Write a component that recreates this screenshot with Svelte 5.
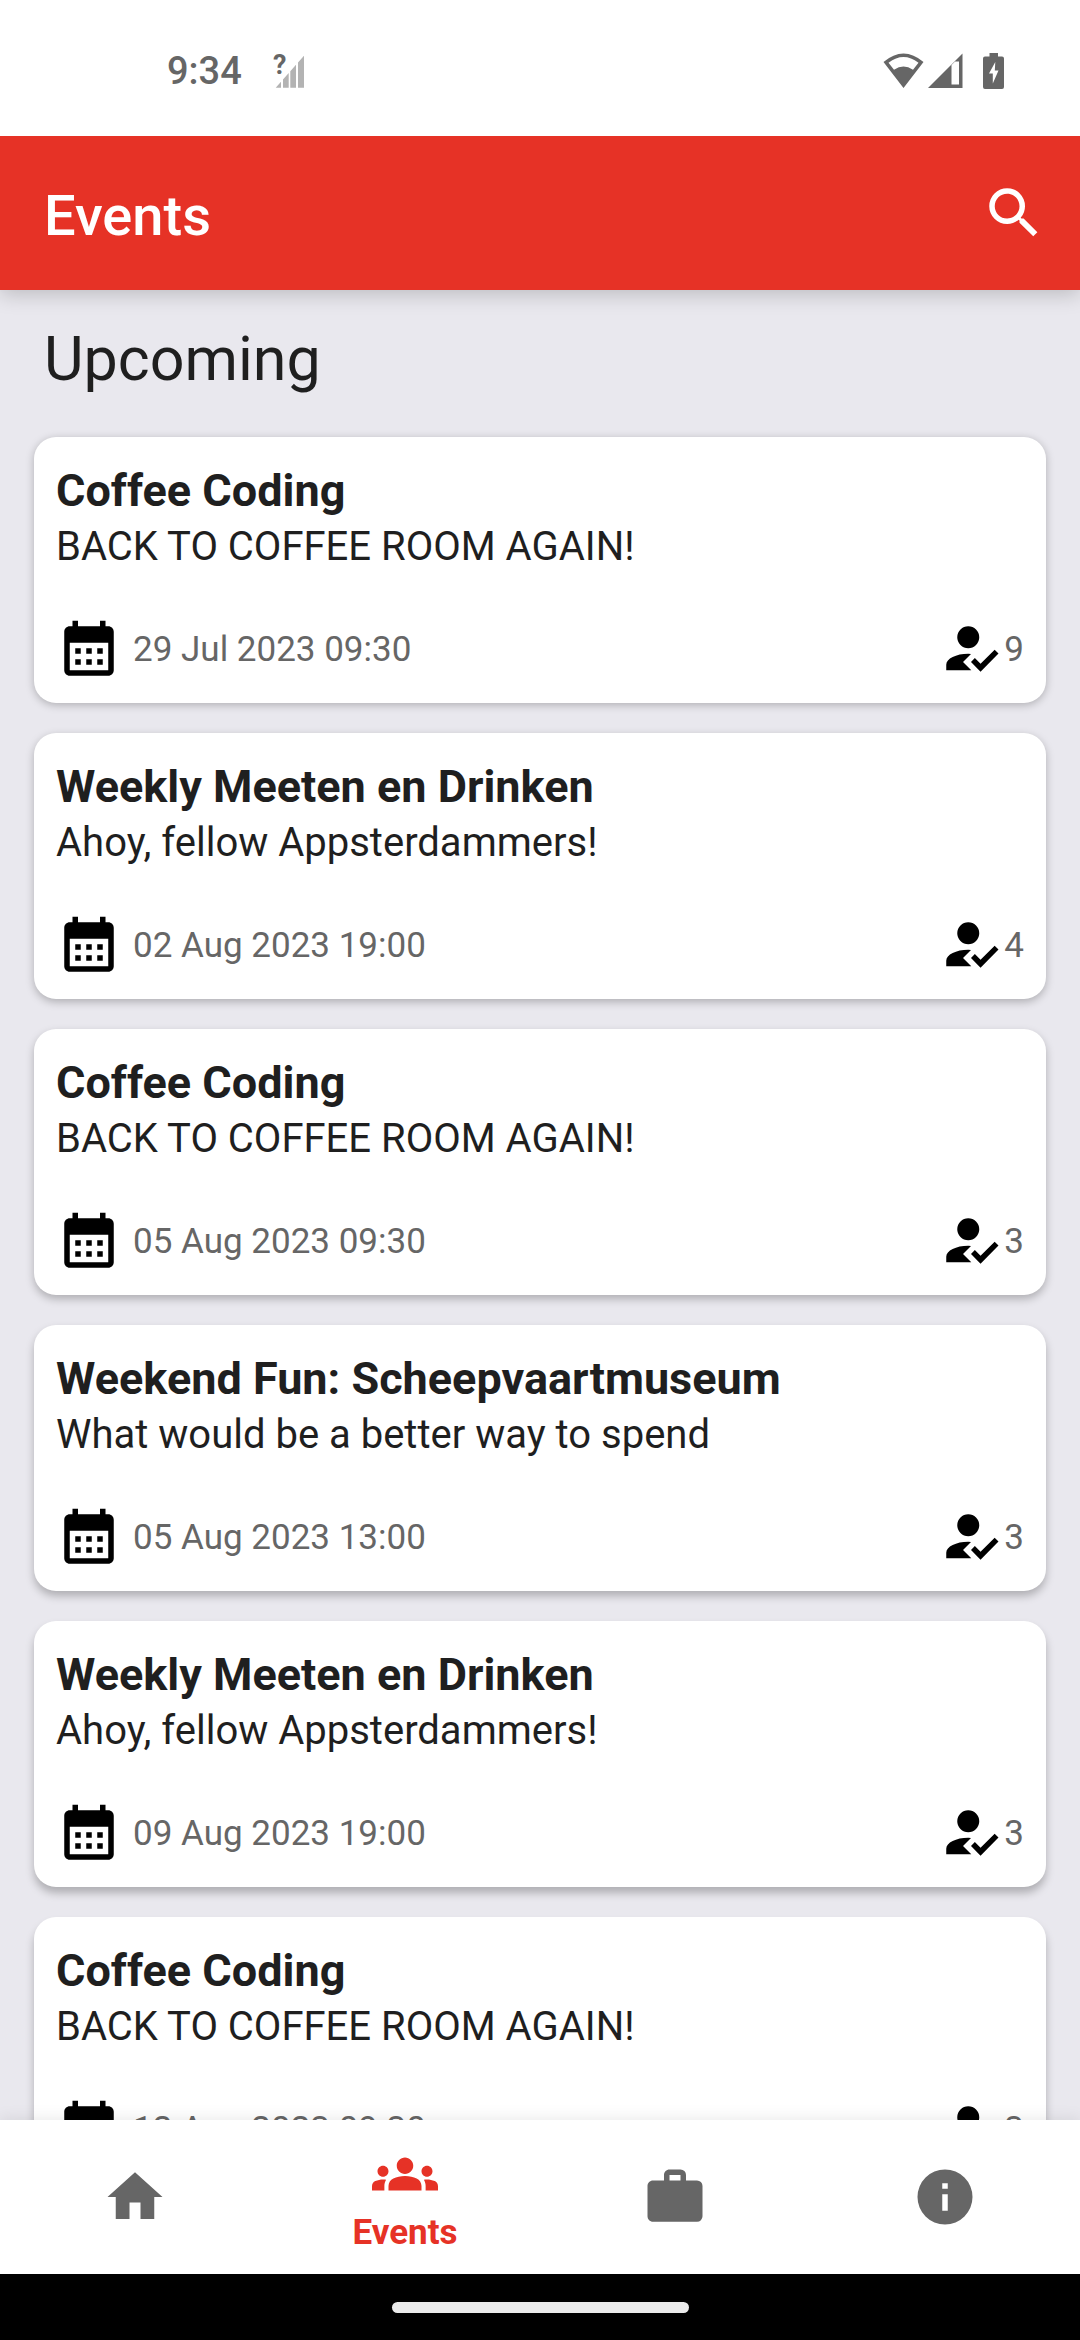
<script>
  const events = [
    { title: 'Coffee Coding', text: 'BACK TO COFFEE ROOM AGAIN!', date: '29 Jul 2023 09:30', going: 9 },
    { title: 'Weekly Meeten en Drinken', text: 'Ahoy, fellow Appsterdammers!', date: '02 Aug 2023 19:00', going: 4 },
    { title: 'Coffee Coding', text: 'BACK TO COFFEE ROOM AGAIN!', date: '05 Aug 2023 09:30', going: 3 },
    { title: 'Weekend Fun: Scheepvaartmuseum', text: 'What would be a better way to spend', date: '05 Aug 2023 13:00', going: 3 },
    { title: 'Weekly Meeten en Drinken', text: 'Ahoy, fellow Appsterdammers!', date: '09 Aug 2023 19:00', going: 3 },
    { title: 'Coffee Coding', text: 'BACK TO COFFEE ROOM AGAIN!', date: '12 Aug 2023 09:30', going: 3 }
  ];

  const tabs = [
    { name: 'Home', path: 'M10 20V14H14V20H19V12H22L12 3L2 12H5V20H10Z' },
    {
      name: 'Events',
      active: true,
      path: 'M12 12.75c1.63 0 3.07.39 4.24.9 1.08.48 1.76 1.56 1.76 2.73V18H6v-1.61c0-1.18.68-2.26 1.76-2.73 1.17-.52 2.61-.91 4.24-.91zM4 13c1.1 0 2-.9 2-2s-.9-2-2-2-2 .9-2 2 .9 2 2 2zm1.13 1.1c-.37-.06-.74-.1-1.13-.1-.99 0-1.93.21-2.78.58C.48 14.9 0 15.62 0 16.43V18h4.5v-1.61c0-.83.23-1.61.63-2.29zM20 13c1.1 0 2-.9 2-2s-.9-2-2-2-2 .9-2 2 .9 2 2 2zm4 3.43c0-.81-.48-1.53-1.22-1.85-.85-.37-1.79-.58-2.78-.58-.39 0-.76.04-1.13.1.4.68.63 1.46.63 2.29V18H24v-1.57zM12 6c1.66 0 3 1.34 3 3s-1.34 3-3 3-3-1.34-3-3 1.34-3 3-3z'
    },
    {
      name: 'Jobs',
      path: 'M10 2H14A2 2 0 0 1 16 4V6H20A2 2 0 0 1 22 8V19A2 2 0 0 1 20 21H4C2.89 21 2 20.1 2 19V8C2 6.89 2.89 6 4 6H8V4C8 2.89 8.89 2 10 2M14 6V4H10V6H14Z'
    },
    { name: 'About', path: 'M13 9H11V7H13M13 17H11V11H13M12 2A10 10 0 0 0 2 12A10 10 0 0 0 12 22A10 10 0 0 0 22 12A10 10 0 0 0 12 2Z' }
  ];
</script>

<div class="screen">
  <div class="status">
    <span class="time">9:34</span>
    <svg class="unknown" width="31" height="36" viewBox="0 0 31 36" aria-hidden="true">
      <path fill="#b3b3b3" d="M1.7 34.7L7 28.7V34.7ZM9 26.4L14.7 20V34.7H9ZM16.3 18.2L22 11.7V34.7H16.3ZM24 9.5L30 2.7V34.7H24Z" />
      <text x="-1" y="21" fill="#666" stroke="none">?</text>
    </svg>
    <div class="radios">
      <svg width="41" height="36" viewBox="0 0 41 36" aria-hidden="true">
        <path fill-rule="evenodd" d="M.5 9Q20.5 -8 40.5 9L20.5 35ZM5.5 9.8L11 16.8Q20.5 10 30 16.8L35.5 9.8Q20.5 -2 5.5 9.8Z" />
      </svg>
      <svg width="35" height="36" viewBox="0 0 35 36" aria-hidden="true">
        <path fill-rule="evenodd" d="M0 35L34.5 .5V35ZM23.5 12V31.5H31V8.5H27Z" />
      </svg>
      <svg class="battery" width="21" height="36" viewBox="0 0 21 36" aria-hidden="true">
        <path fill-rule="evenodd" d="M6.5 0H15V3.5H19A2 2 0 0 1 21 5.5V34A2 2 0 0 1 19 36H2A2 2 0 0 1 0 34V5.5A2 2 0 0 1 2 3.5H6.5ZM12.3 9L6 20.5H9.8V30.5L15.5 17.5H11.8Z" />
      </svg>
    </div>
  </div>

  <header>
    <h1>Events</h1>
    <button class="search" aria-label="Search">
      <svg width="66" height="66" viewBox="0 0 24 24" aria-hidden="true">
        <path d="M15.5 14h-.79l-.28-.27A6.47 6.47 0 0 0 16 9.5 6.5 6.5 0 1 0 9.5 16c1.61 0 3.09-.59 4.23-1.57l.27.28v.79l5 4.99L20.49 19l-4.99-5zm-6 0C7.01 14 5 11.99 5 9.5S7.01 5 9.5 5 14 7.01 14 9.5 11.99 14 9.5 14z" />
      </svg>
    </button>
  </header>

  <main>
    <h2>Upcoming</h2>
    <ul>
      {#each events as event, i}
        <li style="--drop: {2 + i}px">
          <h3>{event.title}</h3>
          <p>{event.text}</p>
          <div class="meta">
            <svg width="66" height="66" viewBox="0 0 24 24" aria-hidden="true">
              <path d="M7 11H9V13H7V11M21 5V19C21 20.11 20.11 21 19 21H5C3.89 21 3 20.1 3 19V5C3 3.9 3.9 3 5 3H6V1H8V3H16V1H18V3H19C20.11 3 21 3.9 21 5M5 19H19V9H5V19M15 13V11H17V13H15M11 13V11H13V13H11M7 15H9V17H7V15M15 17V15H17V17H15M11 17V15H13V17H11Z" />
            </svg>
            <time>{event.date}</time>
            <span class="going">
              <svg width="66" height="66" viewBox="0 1 24 24" aria-hidden="true">
                <path d="M20.6 12.5L22 13.91L15.47 20.5L12 17L13.4 15.59L15.47 17.67L20.6 12.5M9.1 17L12.1 20H3V18C3 15.79 6.58 14 11 14L12 14.1L9.1 17M11 4A4 4 0 0 1 15 8A4 4 0 0 1 11 12A4 4 0 0 1 7 8A4 4 0 0 1 11 4Z" />
              </svg>
              <span>{event.going}</span>
            </span>
          </div>
        </li>
      {/each}
    </ul>
  </main>

  <nav>
    {#each tabs as tab}
      <button class:active={tab.active} aria-label={tab.name}>
        <svg width="66" height="66" viewBox="0 0 24 24" aria-hidden="true"><path d={tab.path} /></svg>
        {#if tab.active}<span>{tab.name}</span>{/if}
      </button>
    {/each}
  </nav>

  <div class="gesture"><div class="handle"></div></div>
</div>

<style>
  :global(body) {
    margin: 0;
  }
  .screen {
    display: flex;
    flex-direction: column;
    height: 100vh;
    overflow: hidden;
    background: #e9e8ee;
    color: #1f1f1f;
    font-family: Roboto, 'Liberation Sans', sans-serif;
  }
  svg {
    display: block;
    flex: none;
    fill: currentColor;
  }
  h1, h2, h3, p, ul {
    margin: 0;
    padding: 0;
    font-weight: 400;
  }
  button {
    margin: 0;
    padding: 0;
    border: 0;
    background: none;
    color: inherit;
    font: inherit;
    cursor: pointer;
  }

  .status {
    position: relative;
    z-index: 2;
    display: flex;
    align-items: center;
    flex: none;
    padding: 46px 76px 40px 167px;
    background: #fff;
    color: #666;
  }
  .time {
    font-size: 38px;
    font-weight: 500;
    line-height: 50px;
  }
  .unknown {
    margin-left: 32px;
    overflow: visible;
  }
  .unknown text {
    font-size: 27px;
    font-weight: 700;
  }
  .radios {
    display: flex;
    gap: 4px;
    margin-left: auto;
  }
  .battery {
    margin-left: 16px;
  }

  header {
    position: relative;
    z-index: 1;
    display: flex;
    justify-content: space-between;
    align-items: flex-start;
    flex: none;
    padding: 44px 33px 38px 44px;
    background: #e63226;
    color: #fff;
    box-shadow: 0 4px 20px rgba(0, 0, 0, 0.2);
  }
  h1 {
    font-size: 56px;
    font-weight: 500;
    line-height: 72px;
  }

  main {
    flex: 1;
    min-height: 0;
    overflow: hidden;
    padding: 34px 34px 0;
  }
  h2 {
    padding: 0 10px 43px;
    font-size: 61px;
    line-height: 70px;
  }
  ul {
    display: flex;
    flex-direction: column;
    gap: 30px;
    list-style: none;
  }
  li {
    padding: 24px 22px 19px;
    border-radius: 22px;
    background: #fff;
    box-shadow: 0 var(--drop) 8px rgba(0, 0, 0, 0.25);
  }
  h3 {
    font-size: 45px;
    font-weight: 700;
    line-height: 60px;
  }
  p {
    font-size: 40px;
    line-height: 52px;
  }
  .meta {
    display: flex;
    align-items: center;
    margin-top: 45px;
    color: #000;
  }
  time,
  .going span {
    padding-bottom: 2px;
    color: #666;
    font-size: 35px;
    line-height: 40px;
  }
  time {
    margin-left: 11px;
  }
  .going {
    display: flex;
    align-items: center;
    margin-left: auto;
  }

  nav {
    position: relative;
    display: flex;
    flex: none;
    height: 154px;
    background: #fff;
    color: #666;
    box-shadow: 0 0 16px rgba(0, 0, 0, 0.1);
  }
  nav button {
    display: flex;
    flex: 1;
    flex-direction: column;
    align-items: center;
    justify-content: center;
    gap: 6px;
  }
  nav .active {
    color: #e63226;
  }
  nav span {
    font-size: 35px;
    font-weight: 700;
    line-height: 40px;
  }

  .gesture {
    position: relative;
    display: flex;
    align-items: center;
    justify-content: center;
    flex: none;
    height: 66px;
    background: #000;
  }
  .handle {
    width: 297px;
    height: 11px;
    border-radius: 6px;
    background: #ebebeb;
  }
</style>
